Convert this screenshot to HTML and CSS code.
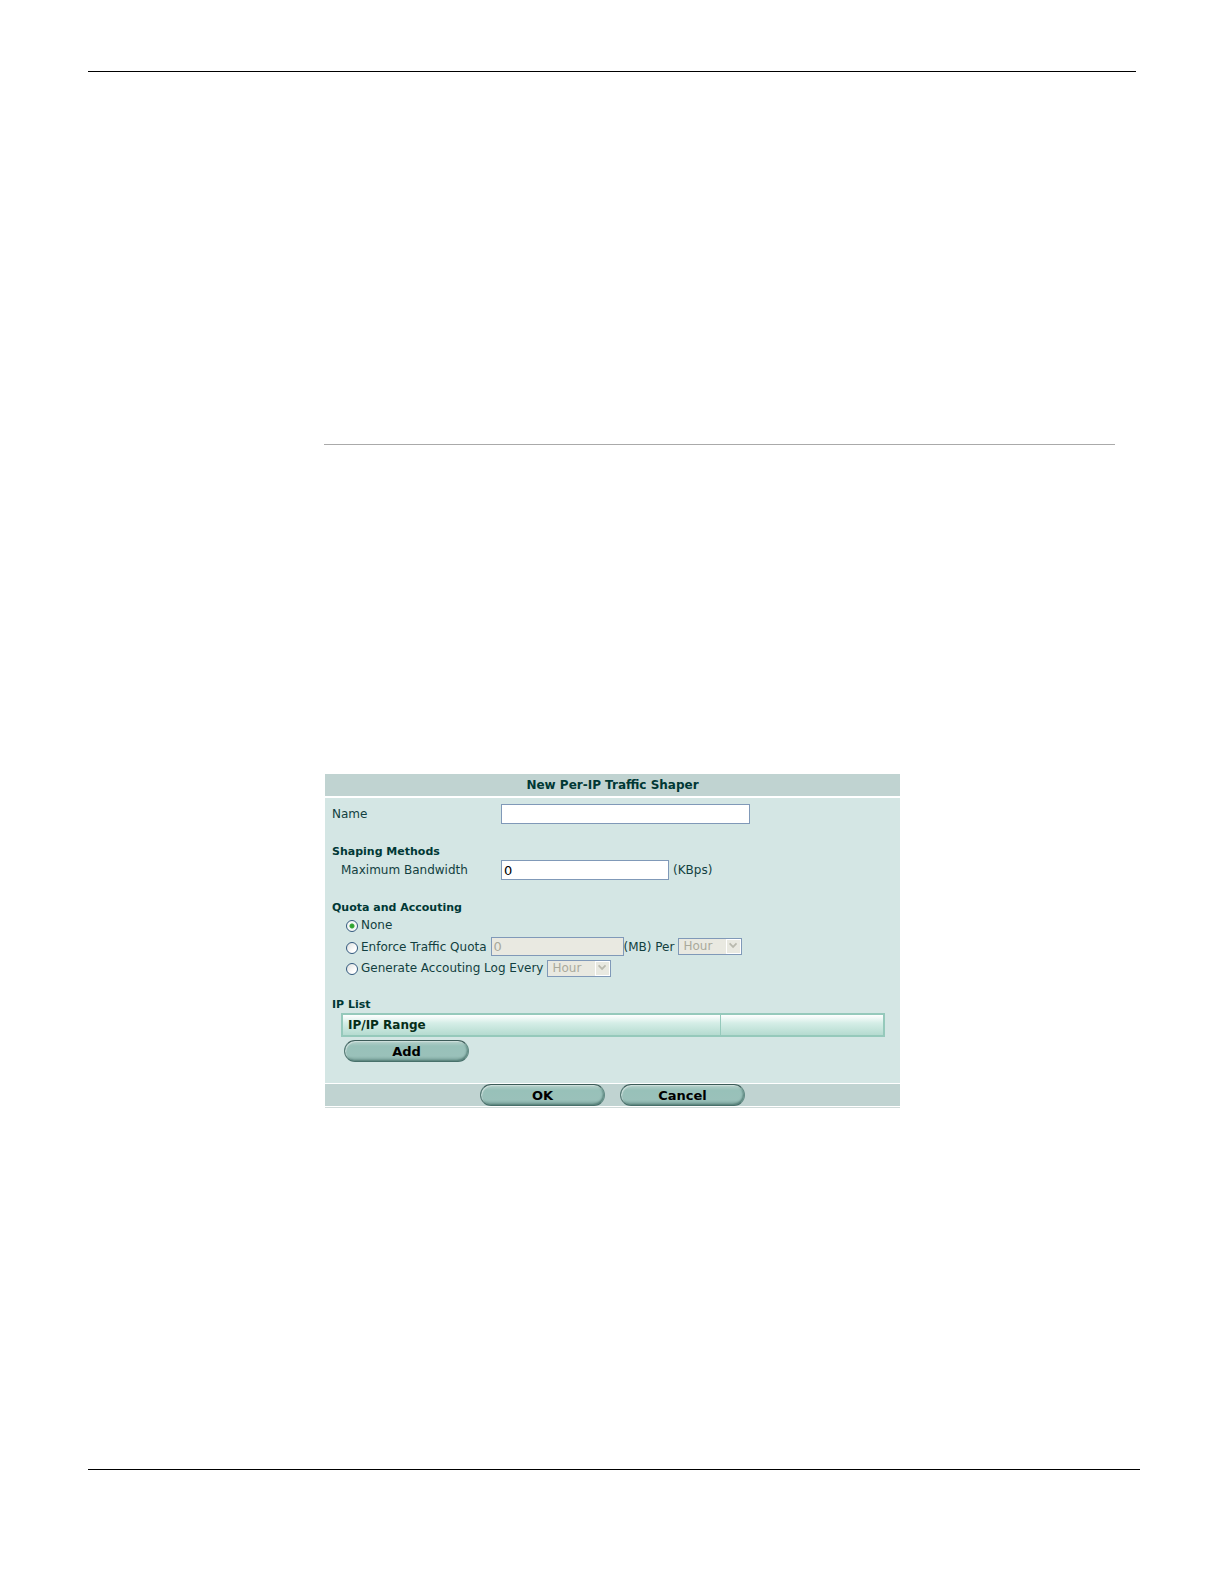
FILE: index.html
```html
<!DOCTYPE html>
<html lang="en">
<head>
<meta charset="utf-8">
<title>New Per-IP Traffic Shaper</title>
<link rel="stylesheet" href="styles.css">
</head>
<body>
<div class="page">
  <hr class="rule">
  <main class="content">
    <hr class="divider">
    <form class="panel">
      <h1 class="panel-title">New Per-IP Traffic Shaper</h1>
      <div class="panel-body">
        <div class="field">
          <label for="name">Name</label>
          <input class="text wide" id="name" type="text">
        </div>
        <section>
          <h2>Shaping Methods</h2>
          <div class="field nested">
            <label for="bandwidth">Maximum Bandwidth</label>
            <input class="text" id="bandwidth" type="text" value="0">
            <span class="unit">(KBps)</span>
          </div>
        </section>
        <section>
          <h2>Quota and Accouting</h2>
          <div class="options">
            <div class="option">
              <input type="radio" name="quota" id="none" checked>
              <label for="none">None</label>
            </div>
            <div class="option">
              <input type="radio" name="quota" id="enforce">
              <label for="enforce">Enforce Traffic Quota</label>
              <input class="text amount" type="text" value="0" aria-label="Quota in MB" disabled>
              <span class="per">(MB) Per</span>
              <span class="picker">
                <select aria-label="Quota period" disabled><option>Hour</option></select>
                <svg viewBox="0 0 15 15" aria-hidden="true"><path d="M3 4l4 4 4-4"/></svg>
              </span>
            </div>
            <div class="option">
              <input type="radio" name="quota" id="generate">
              <label for="generate">Generate Accouting Log Every</label>
              <span class="picker">
                <select aria-label="Log period" disabled><option>Hour</option></select>
                <svg viewBox="0 0 15 15" aria-hidden="true"><path d="M3 4l4 4 4-4"/></svg>
              </span>
            </div>
          </div>
        </section>
        <section>
          <h2>IP List</h2>
          <div class="list">
            <table>
              <thead><tr><th class="range">IP/IP Range</th><th></th></tr></thead>
            </table>
            <button class="pill" type="button">Add</button>
          </div>
        </section>
      </div>
      <div class="panel-footer">
        <button class="pill" type="button">OK</button>
        <button class="pill" type="button">Cancel</button>
      </div>
    </form>
  </main>
  <hr class="rule bottom">
</div>
</body>
</html>
```
FILE: styles.css
```css
* { box-sizing: border-box; }

body {
  margin: 0;
  background: #fff;
  color: #123f40;
  font: 12px/18px "DejaVu Sans", Verdana, sans-serif;
}

.page {
  display: flex;
  flex-direction: column;
  min-height: 100vh;
  padding: 71px 84px 114px 88px;
}

hr { border: 0; margin: 0; }
.rule { height: 1px; background: #000; margin-right: 4px; }
.rule.bottom { margin: auto 0 0; }

.content { padding: 372px 25px 40px 236px; }
.divider { height: 1px; background: #aaa; margin-bottom: 329px; }

.panel {
  max-width: 575px;
  margin-left: 1px;
  border-bottom: 1px solid #d0dad9;
}

h1, h2 { margin: 0; font-weight: bold; color: #003835; }
h2 { padding-top: 1px; font-size: 11px; line-height: 17px; }

.panel-title {
  background: #c0d3d1;
  font-size: 12px;
  line-height: 22px;
  text-align: center;
}

.panel-body {
  margin: 2px 0 1px;
  padding: 6px 15px 21px 7px;
  background: #d4e6e4;
}

section { margin-top: 18px; }

.field { display: flex; align-items: center; }
.field label { width: 169px; }
.nested { padding-left: 9px; }
.nested label { width: 160px; }

.text {
  width: 168px;
  height: 20px;
  padding: 0 2px;
  border: 1px solid #8099b8;
  border-radius: 0;
  background: #fff;
  color: #000;
  font: 13px "DejaVu Sans", Verdana, sans-serif;
}
.wide { width: 249px; }
.unit { margin-left: 4px; }

.options {
  display: flex;
  flex-direction: column;
  gap: 3px;
  padding-left: 14px;
}
.option { display: flex; align-items: center; }
.option label { margin-right: 4px; }

input[type="radio"] {
  appearance: none;
  width: 12px;
  height: 12px;
  margin: 2px 3px 0 0;
  border: 1px solid #33597e;
  border-radius: 50%;
  background: linear-gradient(135deg, #dcdfdd, #fff 70%);
}
input[type="radio"]:checked {
  background: radial-gradient(circle, #2c9f2c 0, #38aa38 2px, #f5f8f6 3px);
}

.amount { width: 133px; height: 19px; }
.amount:disabled { background: #e9e9e1; color: #aaa99c; }
.per { margin-right: 4px; }

.picker { position: relative; display: flex; }
.picker select {
  appearance: none;
  width: 64px;
  height: 17px;
  padding: 0 18px 0 4px;
  border: 1px solid #8099b8;
  border-radius: 0;
  background: #e9e9e1;
  color: #aaa99c;
  font: 12px/15px "DejaVu Sans", Verdana, sans-serif;
  opacity: 1;
}
.picker svg {
  position: absolute;
  top: 1px;
  right: 1px;
  width: 15px;
  height: 15px;
  border: 1px solid #fff;
  fill: none;
  stroke: #b9b9ae;
  stroke-width: 2;
}

.list { padding-left: 9px; }
table {
  width: 100%;
  border: 2px solid #95c9bb;
  border-spacing: 0;
  background: linear-gradient(#fff, #d5eee7 40%, #b5dbd0);
}
th {
  height: 20px;
  padding: 0 5px;
  color: #062d18;
  font-size: 12px;
  line-height: 20px;
  text-align: left;
}
.range { width: 70%; border-right: 1px solid #95c9bb; }

.pill {
  width: 125px;
  height: 22px;
  padding: 1px 0 0;
  border: 1px solid;
  border-color: #3d5c59 #628c85 #48716b #547873;
  border-radius: 11px;
  background: linear-gradient(#b6d0cb, #98c1b9 25%, #9ac1ba 75%, #7ca59d);
  box-shadow: inset 1px 1px 1px #cfe0dd, inset -1px -1px 2px #567f78;
  color: #000;
  font: bold 13px/19px "DejaVu Sans", Verdana, sans-serif;
}
.list .pill { display: block; margin: 3px 0 0 3px; }

.panel-footer {
  display: flex;
  justify-content: center;
  gap: 15px;
  margin-bottom: 1px;
  background: #c0d3d1;
}
```
